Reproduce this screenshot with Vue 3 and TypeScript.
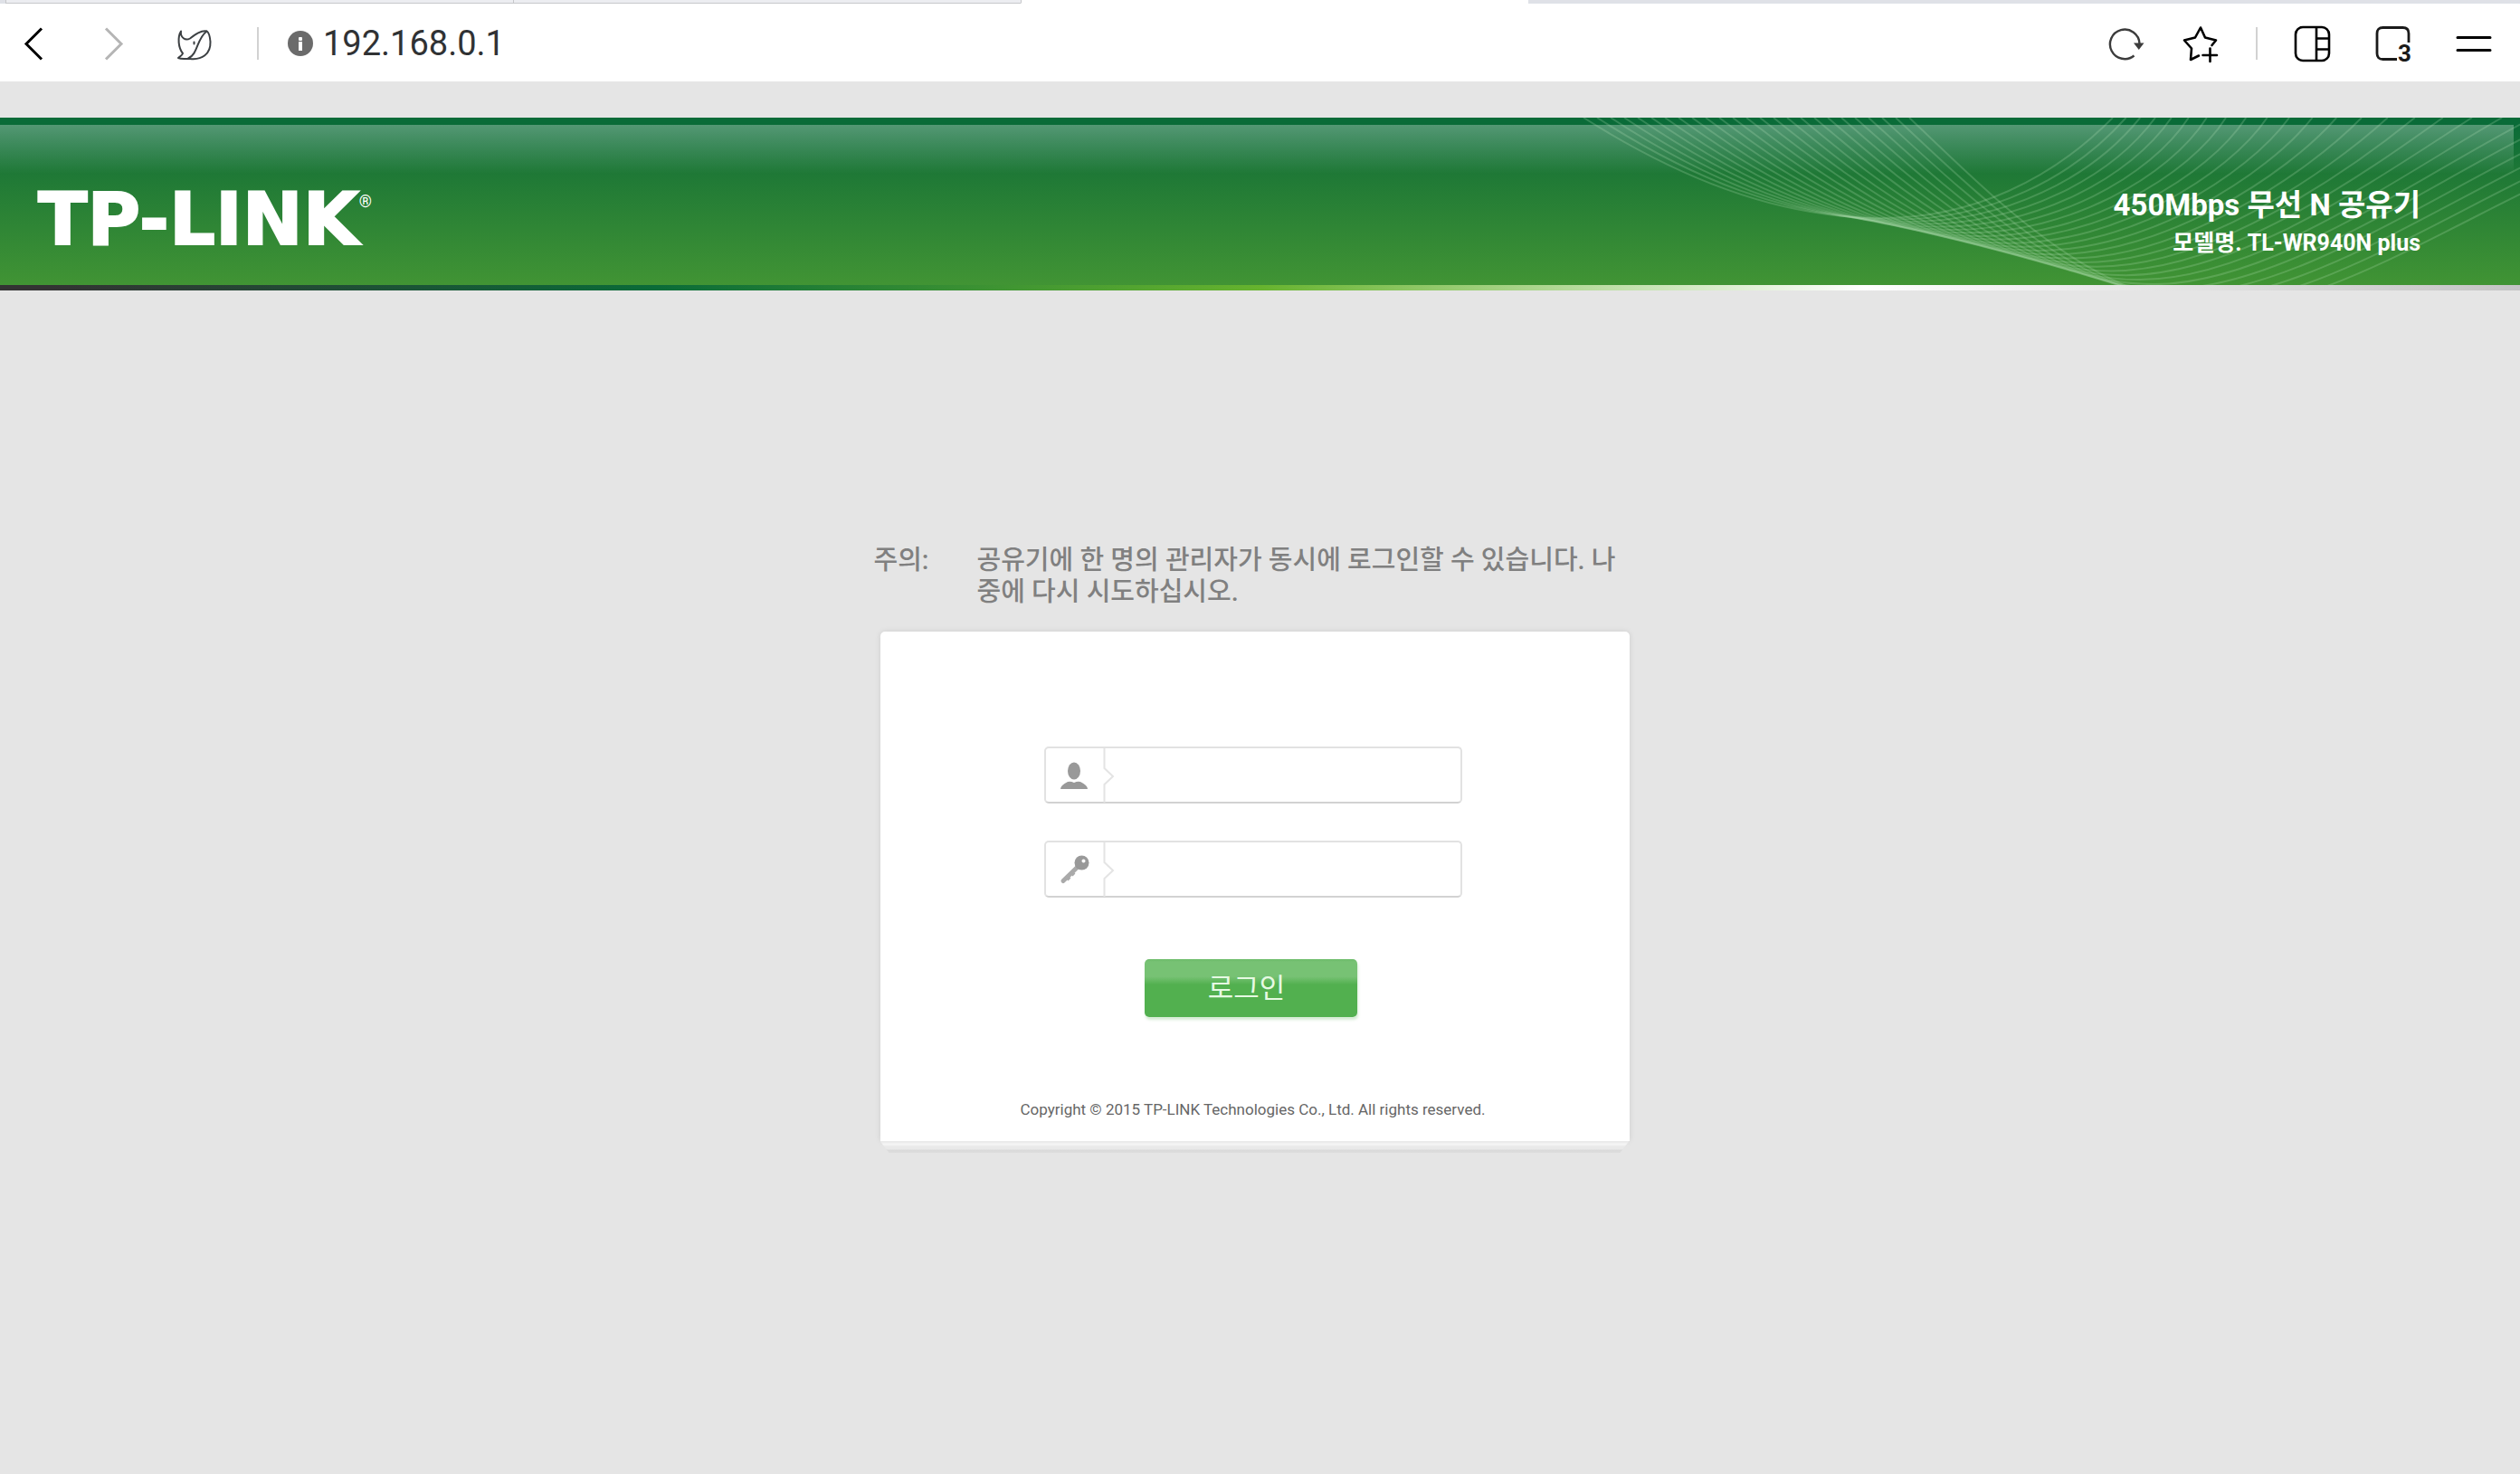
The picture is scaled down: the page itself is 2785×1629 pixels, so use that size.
<script setup lang="ts">
import { ref } from 'vue'

const address = ref('192.168.0.1')
const user = ref('')
const password = ref('')

const CURVES = 25

// Each wave runs down from the top edge, bottoms out and rises again to the right.
const waves: string[] = Array.from({ length: CURVES }, (_, i) => {
  const t = i / (CURVES - 1)
  const mix = (a: number, b: number, k = t) => Math.round((a + (b - a) * k) * 10) / 10
  const low = mix(111, 210, Math.pow(t, 1.3))
  const endX = Math.round((635 + 14 * i + 0.55 * i * i) * 10) / 10
  return [
    `M${mix(50, 410)} 0`,
    `C${mix(150, 510)} ${mix(63, 95)} ${mix(260, 620)} ${low} ${mix(380, 760)} ${low}`,
    `C${mix(480, 900)} ${low} ${mix(568, 1085)} ${mix(68, 60)} ${endX} 0`,
  ].join(' ')
})
</script>

<template>
  <div class="screen">
    <div class="tabs">
      <span class="tab first"></span>
      <span class="tab"></span>
      <span class="tab active"></span>
    </div>

    <nav class="toolbar">
      <button class="tool" type="button" aria-label="Back">
        <svg viewBox="0 0 40 40" fill="none" stroke="#000" stroke-width="3"><path d="M29 3.500L12 20.500L29 37.500" /></svg>
      </button>
      <button class="tool" type="button" aria-label="Forward">
        <svg viewBox="0 0 40 40" fill="none" stroke="#b5b5b5" stroke-width="3"><path d="M11 3.500L28 20.500L11 37.500" /></svg>
      </button>
      <button class="tool" type="button" aria-label="Home">
        <svg viewBox="0 0 40 40" fill="none" stroke="#3c4043" stroke-width="2" stroke-linejoin="round" stroke-linecap="round">
          <path d="M5 6.500C1 13 2 25 7 31C6 34 4 34 2 36C6 38 11 36.500 15 37C28 38.500 38 32 37.500 18C37 12 36 8 33.500 6.500C27 5.500 21 10 15 14.500C10 17.500 4 13.500 5 6.500Z" />
          <path d="M33.500 6.500C22 15 24 32 13 36.500" />
          <path d="M19.500 18.500V20.500" />
        </svg>
      </button>
      <span class="rule"></span>
      <label class="address">
        <svg class="info" viewBox="0 0 28 28" aria-label="Site information">
          <circle cx="14" cy="14" r="14" fill="#6b6b6b" />
          <rect x="12" y="7" width="4" height="4" rx="1" fill="#fff" />
          <rect x="12" y="12" width="4" height="10" fill="#fff" />
        </svg>
        <input v-model="address" type="text" aria-label="Address" />
      </label>
      <button class="tool reload" type="button" aria-label="Reload">
        <svg viewBox="0 0 40 40" fill="none" stroke="#3c3c3c" stroke-width="2.400">
          <path d="M28.500 33.500A16.300 16.300 0 1 1 34.500 20" />
          <path d="M28 19.500H39.500L33.800 27Z" fill="#3c3c3c" stroke="none" />
        </svg>
      </button>
      <button class="tool" type="button" aria-label="Add bookmark">
        <svg viewBox="0 0 40 40" fill="none" stroke="#000" stroke-width="2.600" stroke-linejoin="round" stroke-linecap="round">
          <path d="M18 33.500L9 38L10 25.500L2 16.500L14 13.500L20 2.500L25 13.500L37 16.500L32.500 22" />
          <path d="M30.500 25.500V40M22.500 33H38" />
        </svg>
      </button>
      <span class="rule short"></span>
      <button class="tool" type="button" aria-label="Side panel">
        <svg viewBox="0 0 40 40" fill="none" stroke="#000" stroke-width="2.600">
          <rect x="1" y="2" width="37" height="37" rx="8" />
          <path d="M24 2V39M24 14.500H38M24 26.500H38" />
        </svg>
      </button>
      <button class="tool count" type="button" aria-label="Open tabs">
        <svg viewBox="0 0 40 40" fill="none" stroke="#1a1a1a" stroke-width="2.800">
          <path d="M24 37.500H8.500Q2 37.500 2 31V9Q2 2.500 8.500 2.500H30.500Q37 2.500 37 9V19" />
        </svg>
        <b>3</b>
      </button>
      <button class="tool" type="button" aria-label="Menu">
        <svg viewBox="0 0 40 40" fill="none" stroke="#000" stroke-width="3" stroke-linecap="round"><path d="M2 13.500H38M2 27.500H38" /></svg>
      </button>
    </nav>

    <header class="banner">
      <div class="gloss"></div>
      <svg class="waves" viewBox="0 0 1085 185" aria-hidden="true">
        <path v-for="(d, i) in waves" :key="i" :d="d" />
      </svg>
      <div class="brand">TP-LINK<sup>®</sup></div>
      <div class="model">
        <h1>450Mbps 무선 N 공유기</h1>
        <p>모델명. TL-WR940N plus</p>
      </div>
    </header>
    <div class="stripe"></div>

    <main>
      <div class="notice">
        <span class="caution">주의:</span>
        <p>공유기에 한 명의 관리자가 동시에 로그인할 수 있습니다. 나중에 다시 시도하십시오.</p>
      </div>
      <form class="card" @submit.prevent>
        <label class="field">
          <svg viewBox="0 0 78 60" aria-hidden="true">
            <path d="M64.500 0V22L74 31L64.500 40V60" fill="none" stroke="#e4e4e4" stroke-width="2" />
            <ellipse cx="31" cy="25" rx="7" ry="9.500" fill="#999" />
            <path d="M16 45Q16 41 24 37Q27 36 31 38Q35 36 38 37Q46 41 46 45Z" fill="#999" />
          </svg>
          <input v-model="user" type="text" aria-label="사용자 이름" />
        </label>
        <label class="field">
          <svg viewBox="0 0 78 60" aria-hidden="true">
            <path d="M64.500 0V22L74 31L64.500 40V60" fill="none" stroke="#e4e4e4" stroke-width="2" />
            <path d="M34 28L19 42.500" stroke="#aaa" stroke-width="5" stroke-linecap="round" />
            <path d="M31 36L28 33M26 41L23 38" stroke="#aaa" stroke-width="4" />
            <circle cx="39.500" cy="22.500" r="8" fill="#999" />
            <circle cx="41.500" cy="20.500" r="2" fill="#fff" />
          </svg>
          <input v-model="password" type="password" aria-label="비밀번호" />
        </label>
        <button class="login" type="submit">로그인</button>
        <small>Copyright © 2015 TP-LINK Technologies Co., Ltd. All rights reserved.</small>
      </form>
      <div class="lip"></div>
    </main>
  </div>
</template>

<style>
body {
  background: #e5e5e5;
}
</style>

<style scoped>
.screen {
  font-family: Roboto, "Noto Sans CJK KR", sans-serif;
  color: #808080;
  min-height: 100vh;
  background: #e5e5e5;
}

.screen *,
.screen {
  box-sizing: border-box;
}

h1,
p {
  margin: 0;
}

.tabs {
  display: flex;
  height: 4px;
  padding-left: 6px;
  background: #dfe1e7;
}

.tab {
  width: 561px;
  background: #ecedf1;
  border-left: 1px solid #c6c7ca;
  border-bottom: 1px solid #c6c7ca;
}

.tab.active {
  background: #fff;
  border-bottom-color: #fff;
}

.toolbar {
  display: flex;
  align-items: center;
  height: 86px;
  padding: 2px 31px 0 17px;
  gap: 49px;
  background: #fff;
}

.tool {
  position: relative;
  flex: none;
  width: 40px;
  height: 40px;
  padding: 0;
  border: 0;
  background: none;
}

.tool svg {
  display: block;
  width: 40px;
  height: 40px;
  overflow: visible;
}

.rule {
  flex: none;
  width: 2px;
  height: 36px;
  background: #d2d2d2;
}

.rule.short {
  margin: 0 -8px;
}

.reload {
  margin-right: -7px;
}

.count b {
  position: absolute;
  right: 0;
  bottom: -4px;
  font: 700 26px/26px Roboto, sans-serif;
  color: #1a1a1a;
}

.address {
  display: flex;
  align-items: center;
  flex: 1;
  gap: 11px;
  margin-left: -17px;
}

.info {
  flex: none;
  width: 28px;
  height: 28px;
}

.address input {
  flex: 1;
  min-width: 0;
  padding: 0;
  border: 0;
  outline: 0;
  background: none;
  font: 400 38px/44px Roboto, sans-serif;
  color: #303234;
}

.banner {
  position: relative;
  display: flex;
  align-items: flex-start;
  justify-content: space-between;
  height: 185px;
  margin-top: 40px;
  padding: 0 110px 0 42px;
  background: linear-gradient(#0a6b38 0, #0a6b38 8px, #1e7836 60px, #419434 100%);
  color: #fff;
  overflow: hidden;
}

.gloss {
  position: absolute;
  inset: 8px 7px auto 0;
  height: 54px;
  background: linear-gradient(rgba(255, 255, 255, 0.3), rgba(255, 255, 255, 0));
}

.waves {
  position: absolute;
  top: 0;
  right: 0;
  width: 1085px;
  height: 185px;
  fill: none;
  stroke: rgba(190, 230, 190, 0.22);
  stroke-width: 2px;
}

.brand {
  position: relative;
  display: flex;
  align-items: flex-start;
  padding-top: 67px;
  font: 700 80px/92px "DejaVu Sans", sans-serif;
  -webkit-text-stroke: 2px #fff;
}

.brand sup {
  font: 400 18px/20px Roboto, sans-serif;
  padding-top: 16px;
  -webkit-text-stroke: 0;
}

.model {
  position: relative;
  padding-top: 76px;
  text-align: right;
}

.model h1 {
  font-size: 33px;
  line-height: 42px;
  font-weight: 700;
}

.model p {
  font-size: 25px;
  line-height: 42px;
  font-weight: 700;
}

.stripe {
  height: 6px;
  background: linear-gradient(90deg, #333 0, #333 2%, #0a6b38 26%, #66b32e 50%, #fff 74%, #c4c4c4 100%);
}

main {
  display: flex;
  flex-direction: column;
  align-items: center;
  padding: 281px 12px 0 0;
}

.notice {
  display: flex;
  width: 842px;
  font-size: 29px;
  line-height: 35px;
  font-weight: 500;
}

.caution {
  flex: none;
  width: 114px;
}

.notice p {
  width: 715px;
  word-break: break-all;
}

.card {
  display: flex;
  flex-direction: column;
  align-items: center;
  width: 828px;
  margin-top: 26px;
  padding: 127px 4px 23px 0;
  background: #fff;
  border-radius: 5px 5px 0 0;
  box-shadow: 0 0 6px rgba(0, 0, 0, 0.1);
}

.field {
  display: flex;
  width: 462px;
  height: 63px;
  margin-bottom: 41px;
  border: 2px solid #e2e2e2;
  border-bottom-color: #d2d2d2;
  border-radius: 5px;
}

.field svg {
  flex: none;
  width: 78px;
  height: 60px;
}

.field input {
  flex: 1;
  min-width: 0;
  border: 0;
  outline: 0;
  background: none;
  font: 400 28px/32px Roboto, sans-serif;
  color: #333;
}

.login {
  width: 235px;
  height: 64px;
  margin: 27px 4px 0 0;
  padding: 0 10px 4px 0;
  border: 0;
  border-radius: 5px;
  background: linear-gradient(#6cbb69 0, #77c274 3px, #77c274 30%, #52b04f 44%, #52b04f 100%);
  box-shadow: 1px 3px 3px rgba(82, 176, 79, 0.25);
  font: 400 31px/36px "Noto Sans CJK KR", sans-serif;
  color: #e6f9e3;
}

.card small {
  margin-top: 90px;
  font-size: 17px;
  line-height: 24px;
  color: #666;
}

.lip {
  width: 828px;
  height: 13px;
  background: linear-gradient(#ebebeb 0, #ebebeb 2px, #f6f6f6 3px, #f0f0f0 5px, #e9e9e9 6px, #e9e9e9 9px, #dadada 10px, #dcdcdc 13px);
  clip-path: polygon(0 0, 100% 0, calc(100% - 10px) 100%, 10px 100%);
}
</style>
